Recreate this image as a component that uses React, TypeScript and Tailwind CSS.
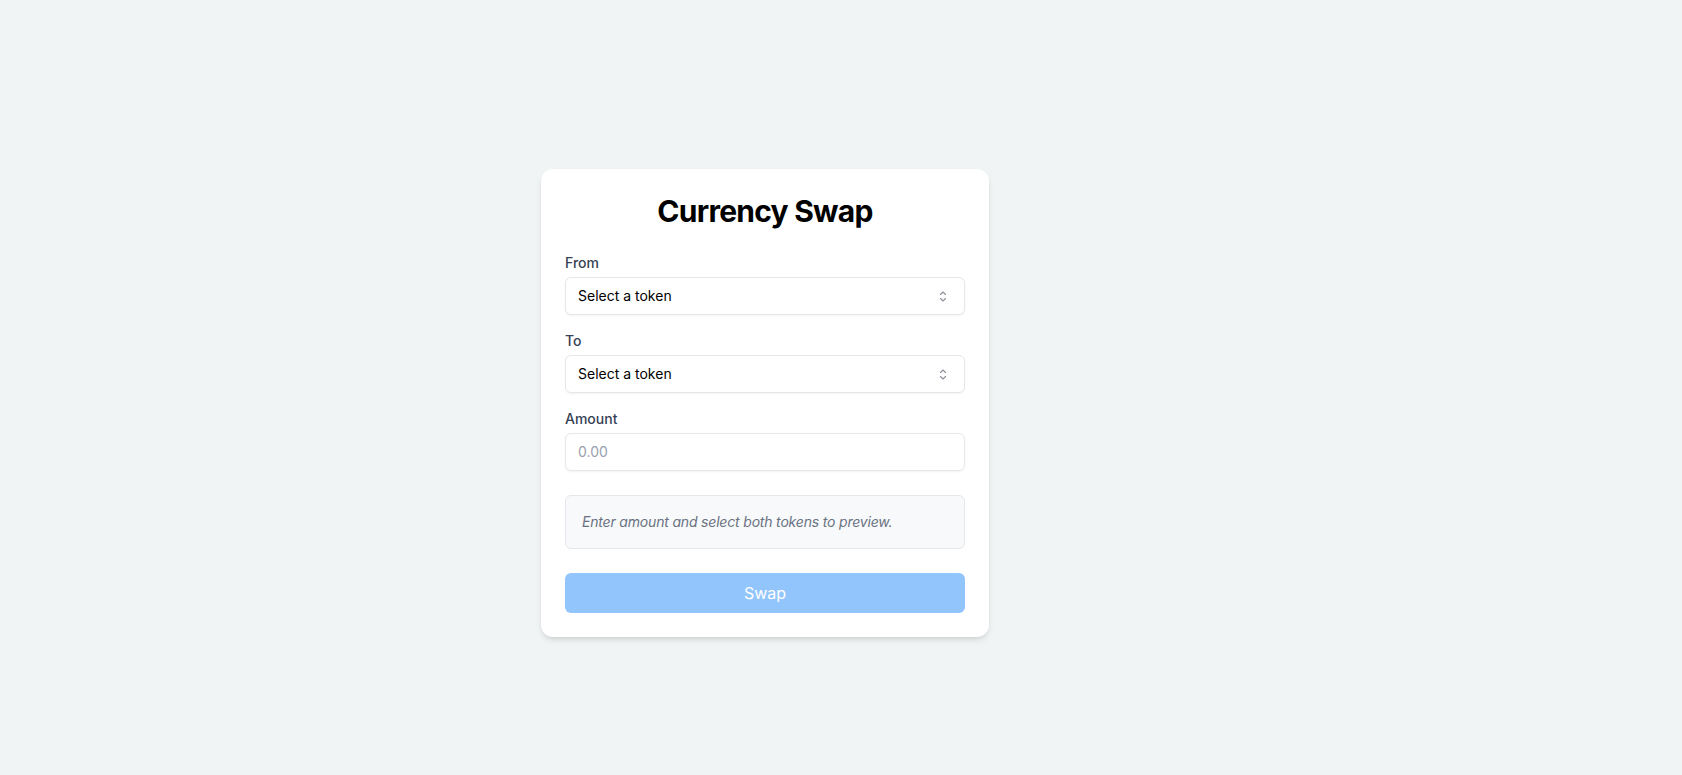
export default function App() {
    return (
        <div
            className="min-h-screen w-full bg-[#f1f4f5] flex justify-center pt-[169px] pr-[152px]"
            style={{ fontFamily: 'Inter, "Noto Sans", sans-serif' }}
        >
            <div className="w-[448px] h-fit bg-white rounded-xl shadow-md p-6">
                {/* Header */}
                <h1 className="text-3xl font-bold text-black text-center mb-6 tracking-tight">Currency Swap</h1>

                <div className="space-y-4">
                    <TokenSelect label="From" />
                    <TokenSelect label="To" />

                    <div>
                        <label className="block text-sm font-medium text-gray-700 mb-1">Amount</label>
                        <input
                            type="text"
                            placeholder="0.00"
                            className="w-full border border-gray-200 rounded-md px-3 py-2 text-sm text-black placeholder:text-gray-400 shadow-xs outline-none"
                        />
                    </div>
                </div>

                {/* Preview */}
                <div className="mt-6 p-4 bg-[#f7f9fa] border border-gray-200 rounded-md">
                    <p className="text-sm italic text-gray-500 tracking-[-0.013em]">Enter amount and select both tokens to preview.</p>
                </div>

                <button
                    disabled
                    className="mt-6 w-full py-2 rounded-md bg-[#93c5fd] text-white text-base"
                >
                    Swap
                </button>
            </div>
        </div>
    );
}

function TokenSelect({ label }: { label: string }) {
    return (
        <div>
            <label className="block text-sm font-medium text-gray-700 mb-1">{label}</label>
            <div className="flex items-center justify-between w-full border border-gray-200 rounded-md px-3 py-2 bg-white shadow-xs">
                <span className="text-sm text-black">Select a token</span>
                <svg width="8" height="13" viewBox="0 0 8 13" fill="none" className="mr-[5px]">
                    <path d="M1.5 4.5 L4 2 L6.5 4.5" stroke="#8b9099" strokeWidth="1.1" strokeLinecap="round" strokeLinejoin="round" />
                    <path d="M1.5 8.5 L4 11 L6.5 8.5" stroke="#8b9099" strokeWidth="1.1" strokeLinecap="round" strokeLinejoin="round" />
                </svg>
            </div>
        </div>
    );
}
